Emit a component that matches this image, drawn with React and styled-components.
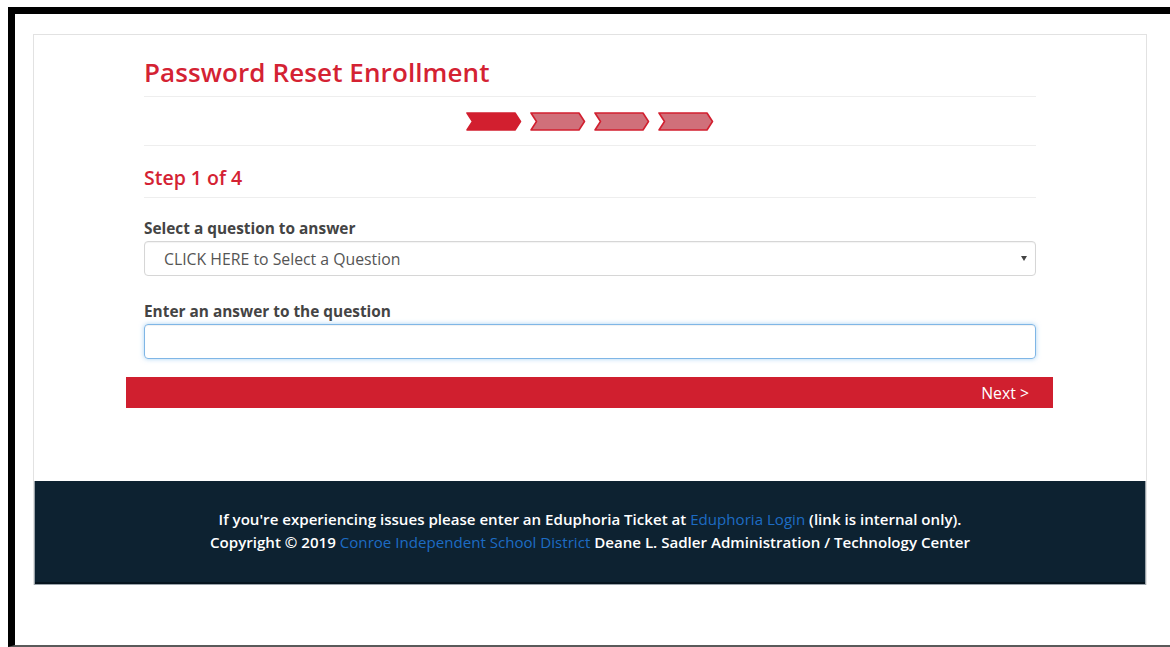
import React from "react";
import styled, { createGlobalStyle } from "styled-components";

const Global = createGlobalStyle`
  html, body { margin: 0; padding: 0; background: #fff; }
  body { font-family: "Open Sans", "Liberation Sans", sans-serif; overflow: hidden; }
  * { box-sizing: border-box; }
`;

const Frame = styled.div`
  margin: 7px 0 0 8px;
  height: 640px;
  border-top: 7px solid #000;
  border-left: 7px solid #000;
  border-bottom: 2px solid #5a5a5a;
  padding: 20px 23px 0 18px;
`;

const Card = styled.div`
  border: 1px solid #e2e2e2;
  border-bottom: none;
  background: #fff;
  display: flex;
  flex-direction: column;
`;

const Body = styled.div`
  padding: 22px 110px 0;
  display: flex;
  flex-direction: column;
`;

const Title = styled.h1`
  margin: 0;
  padding-bottom: 9px;
  border-bottom: 1px solid #eee;
  color: #d42233;
  font-size: 26px;
  font-weight: 600;
  line-height: 30px;
  letter-spacing: 0.1px;
`;

const Steps = styled.div`
  display: flex;
  justify-content: center;
  gap: 8px;
  padding: 15px 0 14px;
  border-bottom: 1px solid #eee;
`;

const StepHeading = styled.h2`
  margin: 0;
  padding: 20px 0 7px;
  border-bottom: 1px solid #eee;
  color: #d42233;
  font-size: 19.5px;
  font-weight: 600;
  line-height: 24px;
`;

const Field = styled.div`
  display: flex;
  flex-direction: column;
  gap: 2px;
  margin-top: ${(p) => p.$top}px;
`;

const Label = styled.label`
  color: #444;
  font-size: 15.4px;
  font-weight: 700;
  line-height: 20px;
`;

const SelectBox = styled.div`
  height: 35px;
  border: 1px solid #d6d6d6;
  border-radius: 4px;
  display: flex;
  align-items: center;
  justify-content: space-between;
  padding: 0 8px 0 19px;
  color: #555;
  font-size: 15.8px;
  box-shadow: inset 0 1px 1px rgba(0, 0, 0, 0.05);
`;

const Caret = styled.span`
  width: 0;
  height: 0;
  border-left: 3.5px solid transparent;
  border-right: 3.5px solid transparent;
  border-top: 5px solid #444;
`;

const Input = styled.div`
  height: 35px;
  border: 1px solid #7fb6e6;
  border-radius: 4px;
  box-shadow: inset 0 1px 1px rgba(0, 0, 0, 0.06), 0 0 5px rgba(102, 175, 233, 0.55);
`;

const NextBar = styled.div`
  margin: 18px -17px 0 -18px;
  height: 31px;
  background: #d01f2f;
  display: flex;
  align-items: center;
  justify-content: flex-end;
  padding-right: 24px;
  color: #fff;
  font-size: 15.8px;
`;

const Footer = styled.footer`
  margin-top: 73px;
  height: 104px;
  background: #0d2231;
  border: 1px solid #9aa3aa;
  border-top: none;
  box-shadow: inset 0 -2px 0 #06141e;
  display: flex;
  flex-direction: column;
  align-items: center;
  justify-content: center;
  padding-bottom: 4px;
  color: #fff;
  font-size: 15.1px;
  font-weight: 600;
  line-height: 23px;
`;

const Link = styled.a`
  color: #1d6cc4;
  font-weight: 400;
  text-decoration: none;
`;

const Chevron = ({ active }) => (
  <svg width="56" height="19" viewBox="0 0 56 19">
    <polygon
      points="1,1 49,1 54.5,9.5 49,18 1,18 6.5,9.5"
      fill={active ? "#d21f2f" : "#d0707a"}
      stroke="#d21f2f"
      strokeWidth="1.6"
      strokeLinejoin="round"
    />
  </svg>
);

export default function App() {
  return (
    <>
      <Global />
      <Frame>
        <Card>
          <Body>
            <Title>Password Reset Enrollment</Title>
            <Steps>
              <Chevron active />
              <Chevron />
              <Chevron />
              <Chevron />
            </Steps>
            <StepHeading>Step 1 of 4</StepHeading>
            <Field $top={21}>
              <Label>Select a question to answer</Label>
              <SelectBox>
                CLICK HERE to Select a Question
                <Caret />
              </SelectBox>
            </Field>
            <Field $top={26}>
              <Label>Enter an answer to the question</Label>
              <Input />
            </Field>
            <NextBar>Next &gt;</NextBar>
          </Body>
          <Footer>
            <div>
              If you're experiencing issues please enter an Eduphoria Ticket at{" "}
              <Link>Eduphoria Login</Link> (link is internal only).
            </div>
            <div>
              Copyright © 2019 <Link>Conroe Independent School District</Link> Deane L.
              Sadler Administration / Technology Center
            </div>
          </Footer>
        </Card>
      </Frame>
    </>
  );
}
